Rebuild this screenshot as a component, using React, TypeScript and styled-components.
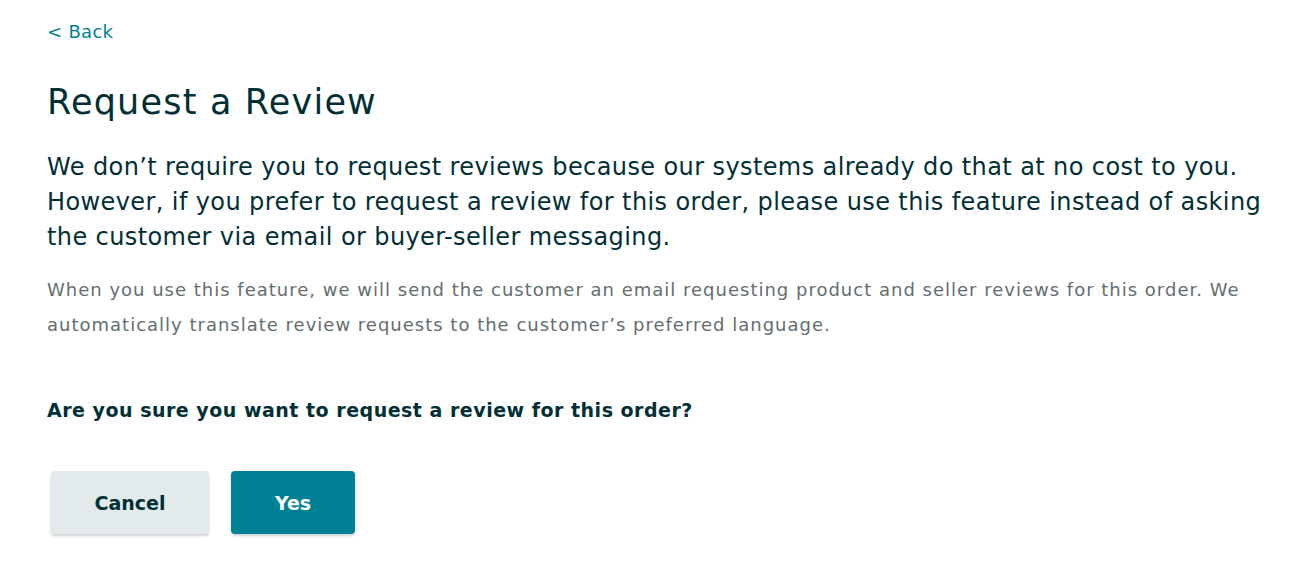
import React from 'react'
import styled, { createGlobalStyle } from 'styled-components'

const GlobalStyle = createGlobalStyle`
    html, body {
        margin: 0;
        padding: 0;
        background: #ffffff;
    }
    body {
        font-family: "DejaVu Sans", "Open Sans", sans-serif;
        color: #002f36;
    }
`

const Page = styled.div`
    width: 1310px;
    height: 576px;
    box-sizing: border-box;
    padding: 20px 47px 0 47px;
    display: flex;
    flex-direction: column;
`

const BackLink = styled.a`
    color: #008296;
    font-size: 18px;
    line-height: 24px;
    letter-spacing: 0.3px;
    text-decoration: none;
    cursor: pointer;
`

const Title = styled.h1`
    margin: 36px 0 0 0;
    font-size: 35px;
    line-height: 44px;
    font-weight: 400;
    letter-spacing: 1.2px;
    color: #002f36;
`

const Lead = styled.p`
    margin: 26px 0 0 0;
    font-size: 24px;
    line-height: 35px;
    font-weight: 400;
    letter-spacing: 0.4px;
    color: #002f36;
    white-space: nowrap;
`

const Note = styled.p`
    margin: 17px 0 0 0;
    font-size: 18px;
    line-height: 35px;
    letter-spacing: 1px;
    color: #636e70;
    white-space: nowrap;
`

const Question = styled.p`
    margin: 56px 0 0 0;
    font-size: 19px;
    line-height: 24px;
    font-weight: 700;
    letter-spacing: 0.5px;
    color: #002f36;
`

const Actions = styled.div`
    display: flex;
    gap: 22px;
    margin: 49px 0 0 4px;
`

const Button = styled.button<{ $primary?: boolean }>`
    height: 63px;
    width: ${({ $primary }) => ($primary ? '124px' : '158px')};
    border: none;
    border-radius: 4px;
    font-family: inherit;
    font-size: 19px;
    font-weight: 700;
    cursor: pointer;
    background: ${({ $primary }) => ($primary ? '#008094' : '#e3eaec')};
    color: ${({ $primary }) => ($primary ? '#ffffff' : '#002f36')};
    box-shadow: 0 2px 3px rgba(0, 0, 0, 0.18);
`

const App = () => {
    return (
        <>
            <GlobalStyle />
            <Page>
                <BackLink>&lt; Back</BackLink>
                <Title>Request a Review</Title>
                <Lead>
                    We don’t require you to request reviews because our systems already do that at no cost to you.
                    <br />
                    However, if you prefer to request a review for this order, please use this feature instead of asking
                    <br />
                    the customer via email or buyer-seller messaging.
                </Lead>
                <Note>
                    When you use this feature, we will send the customer an email requesting product and seller reviews for this order. We
                    <br />
                    automatically translate review requests to the customer’s preferred language.
                </Note>
                <Question>Are you sure you want to request a review for this order?</Question>
                <Actions>
                    <Button>Cancel</Button>
                    <Button $primary>Yes</Button>
                </Actions>
            </Page>
        </>
    )
}

export default App
